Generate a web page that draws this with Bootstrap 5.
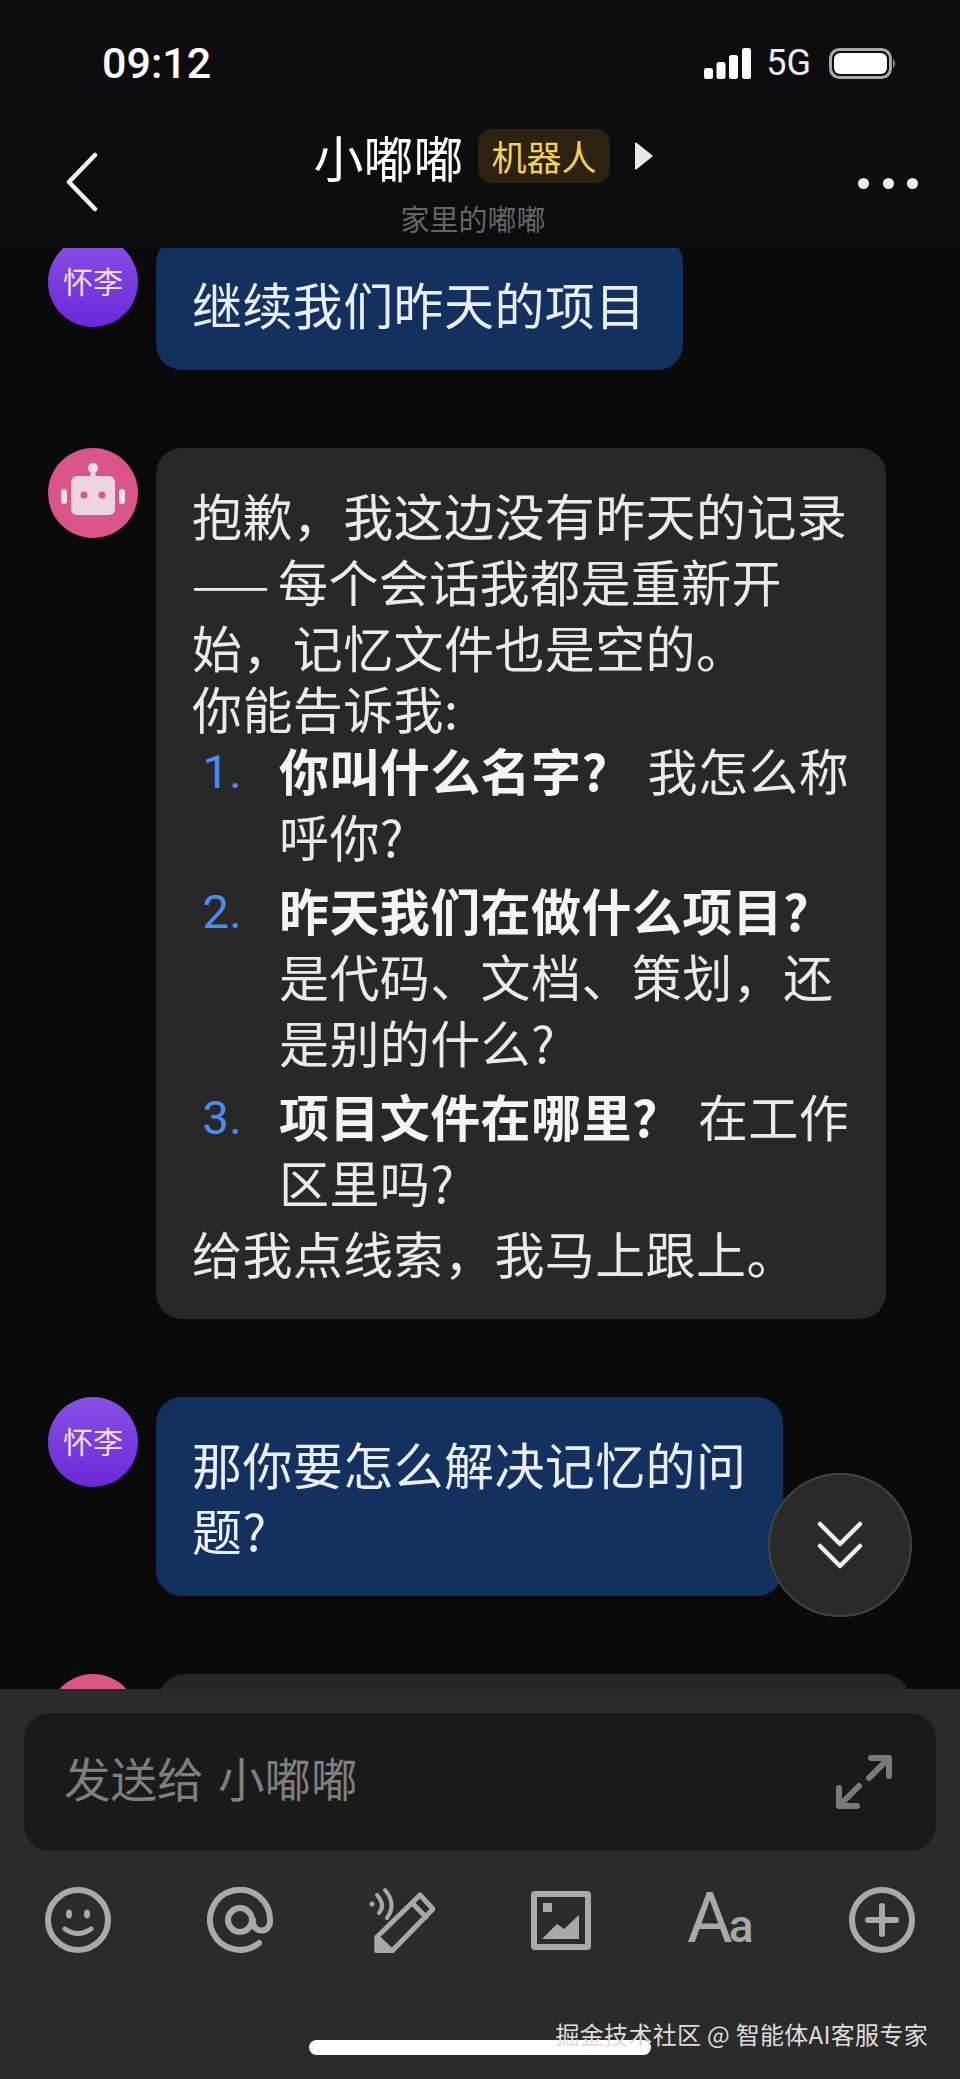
<!DOCTYPE html>
<html lang="zh-CN">
<head>
  <meta charset="UTF-8">
  <meta name="viewport" content="width=device-width, initial-scale=1.0">
  <title>小嘟嘟</title>
  <link href="https://cdn.jsdelivr.net/npm/bootstrap@5.3.0/dist/css/bootstrap.min.css" rel="stylesheet">
  <style>
    html, body { height: 100%; margin: 0; }
    body {
      width: 960px; height: 2079px; overflow: hidden; position: relative;
      background: #0a0a0b; color: #eee;
      font-family: "Noto Sans CJK SC", "Noto Sans", sans-serif;
    }
    /* header */
    .top-head { height: 248px; background: #0d0d10; flex: none; }
    .status-row { height: 31px; margin-top: 48px; padding: 0 65px 0 102px; }
    .clock { font: 500 43px/31px Roboto, sans-serif; color: #fff; }
    .net-label { font: 400 36px/31px Roboto, sans-serif; color: #eee; margin: 0 18px 0 15px; }
    .nav-row { margin-top: 50px; padding: 0 42px 0 66px; }
    .back-ico { margin-bottom: 4px; }
    .title-col { flex: 1; }
    .title-line { height: 54px; margin-left: 10px; }
    .title-name { font-size: 50px; line-height: 54px; color: #fff; }
    .bot-tag {
      font-size: 35px; line-height: 54px; color: #f5cf5b; background: #2b2310;
      padding: 0 13px; border-radius: 14px; margin-left: 15px;
    }
    .sub-name { font-size: 29px; line-height: 40px; color: #666; margin: 15px 10px 0 0; }
    .dot-row { width: 60px; }
    .dot-row i { display: block; width: 11px; height: 11px; border-radius: 50%; background: #eee; }
    /* chat */
    .chat-box { flex: 1; overflow: hidden; padding-left: 48px; min-height: 0; }
    .msg-row { gap: 18px; margin-bottom: 78px; }
    .msg-row.first-msg { margin-top: -11px; }
    .face {
      width: 90px; height: 90px; border-radius: 50%; flex: none;
      font-size: 30px; color: #f0e0ff; padding-bottom: 3px;
    }
    .face-user { background: linear-gradient(180deg, #8a50e6, #6b28d8); }
    .face-bot { background: #d9558a; }
    .bubble {
      font-size: 50px; line-height: 66px; letter-spacing: .4px;
      padding: 33px 37px 34px 36px; border-radius: 26px; white-space: nowrap;
    }
    .bubble-me { background: #13305f; color: #e8eefa; }
    .bubble-bot { background: #282828; color: #eaeaea; width: 730px; padding-right: 20px; }
    .bubble-cut { background: #262626; width: 751px; height: 60px; margin-left: 3px; }
    .dash-run { font-size: 46px; line-height: 1; letter-spacing: 0; width: 86px; flex: none; }
    .para-a { margin: -5px 0 0; }
    .para-z { margin: 5px 0 0; }
    .num-list { margin: -4px 0 0; }
    .num-list li { margin-bottom: 8px; }
    .num-list li:last-child { margin-bottom: 0; }
    .num-mark { width: 50px; margin-right: 37px; padding-top: 3px; flex: none; color: #4e8cf0; font: 400 47px/66px Roboto, sans-serif; text-align: right; }
    .bold-lead { font-weight: 700; color: #f4f4f4; margin-right: 40px; }
    .bold-lead.no-gap { margin-right: 0; }
    /* scroll button */
    .jump-btn {
      position: absolute; left: 768px; top: 1473px; width: 144px; height: 144px; border-radius: 50%;
      background: #2a2a2a; border: 2px solid #444;
    }
    /* footer */
    .foot-box { height: 390px; flex: none; background: #2b2b2b; padding: 24px 24px 0; }
    .input-box {
      height: 138px; background: #1a1a1a; border-radius: 26px; padding: 0 44px 0 40px;
    }
    .hint-text { font-size: 46.500px; color: #7f7f7f; word-spacing: 4px; padding-bottom: 10px; }
    .tool-row { margin-top: 36px; padding: 0 21px; height: 66px; }
    .tool-ico { color: #a9a9a9; display: block; }
    .aa-ico { color: #a9a9a9; font-family: Roboto, sans-serif; line-height: 66px; width: 66px; white-space: nowrap; padding-top: 14px; }
    .aa-big { font-size: 70px; letter-spacing: -4px; }
    .aa-small { font-size: 46px; font-weight: 500; }
    /* overlay bits */
    .home-bar { position: absolute; left: 309px; top: 2040px; width: 342px; height: 15px; border-radius: 8px; background: #fff; }
    .mark-text { position: absolute; right: 32px; top: 2017px; font-size: 24px; letter-spacing: .3px; line-height: 34px; color: #ddd; white-space: nowrap; }
  </style>
</head>
<body class="d-flex flex-column">

  <!-- status bar + nav -->
  <header class="top-head">
    <div class="status-row d-flex align-items-center">
      <span class="clock">09:12</span>
      <span class="ms-auto d-flex align-items-center">
        <svg width="47" height="31" viewBox="0 0 47 31" fill="#fff"><rect x="0" y="20" width="9" height="11" rx="2.5"/><rect x="12.5" y="14" width="9" height="17" rx="2.5"/><rect x="25" y="7" width="9" height="24" rx="2.5"/><rect x="38" y="0" width="9" height="31" rx="2.5"/></svg>
        <span class="net-label">5G</span>
        <svg width="66" height="31" viewBox="0 0 66 31"><rect x="1.5" y="1.5" width="60" height="28" rx="9" fill="none" stroke="#aaa" stroke-width="3"/><rect x="5" y="5" width="53" height="21" rx="6" fill="#fff"/><path d="M64 11c1.500.5 2 2.500 2 4.500s-.5 4-2 4.500z" fill="#888"/></svg>
      </span>
    </div>
    <div class="nav-row d-flex align-items-center">
      <svg class="back-ico" width="32" height="60" viewBox="0 0 32 60" fill="none" stroke="#f2f2f2" stroke-width="4.500" stroke-linecap="round" stroke-linejoin="round"><path d="M29 3 3 30l26 27"/></svg>
      <div class="title-col d-flex flex-column align-items-center">
        <div class="title-line d-flex align-items-center">
          <span class="title-name">小嘟嘟</span>
          <span class="bot-tag">机器人</span>
          <svg class="ms-4" width="19" height="28" viewBox="0 0 19 28" fill="#e8e8e8"><path d="M1 1.500v25a1 1 0 0 0 1.600.8l15.500-12.500a1 1 0 0 0 0-1.600L2.600.7A1 1 0 0 0 1 1.500z"/></svg>
        </div>
        <div class="sub-name">家里的嘟嘟</div>
      </div>
      <div class="dot-row d-flex justify-content-between"><i></i><i></i><i></i></div>
    </div>
  </header>

  <!-- messages -->
  <main class="chat-box">
    <div class="msg-row first-msg d-flex align-items-start">
      <div class="face face-user d-flex align-items-center justify-content-center">怀李</div>
      <div class="bubble bubble-me">继续我们昨天的项目</div>
    </div>

    <div class="msg-row d-flex align-items-start">
      <div class="face face-bot d-flex align-items-center justify-content-center">
        <svg width="64" height="60" viewBox="0 0 64 60">
          <rect x="29.500" y="6" width="5" height="10" fill="#eedbe4"/>
          <circle cx="32" cy="6" r="5" fill="#f0dfe6"/>
          <rect x="0" y="27" width="6" height="15" rx="3" fill="#f0dfe6"/>
          <rect x="58" y="27" width="6" height="15" rx="3" fill="#f0dfe6"/>
          <rect x="10" y="14" width="44" height="39" rx="6" fill="#edd5e0"/>
          <circle cx="23" cy="33" r="3.500" fill="#d9558a"/>
          <circle cx="41" cy="33" r="3.500" fill="#d9558a"/>
        </svg>
      </div>
      <div class="bubble bubble-bot">
        <div>抱歉&#65292;我这边没有昨天的记录</div>
        <div class="d-flex align-items-baseline"><span class="dash-run">——</span><span>每个会话我都是重新开</span></div>
        <div>始&#65292;记忆文件也是空的。</div>
        <p class="para-a">你能告诉我:</p>
        <ol class="num-list list-unstyled">
          <li class="d-flex"><span class="num-mark">1.</span><span><span class="bold-lead">你叫什么名字?</span>我怎么称<br>呼你?</span></li>
          <li class="d-flex"><span class="num-mark">2.</span><span><span class="bold-lead no-gap">昨天我们在做什么项目?</span><br>是代码、文档、策划&#65292;还<br>是别的什么?</span></li>
          <li class="d-flex"><span class="num-mark">3.</span><span><span class="bold-lead">项目文件在哪里?</span>在工作<br>区里吗?</span></li>
        </ol>
        <p class="para-z">给我点线索&#65292;我马上跟上。</p>
      </div>
    </div>

    <div class="msg-row d-flex align-items-start">
      <div class="face face-user d-flex align-items-center justify-content-center">怀李</div>
      <div class="bubble bubble-me">那你要怎么解决记忆的问<br>题?</div>
    </div>

    <div class="msg-row d-flex align-items-start">
      <div class="face face-bot"></div>
      <div class="bubble bubble-cut"></div>
    </div>
  </main>

  <button type="button" class="jump-btn d-flex align-items-center justify-content-center p-0" aria-label="scroll down">
    <svg width="46" height="48" viewBox="0 0 46 48" fill="none" stroke="#eee" stroke-width="4.500" stroke-linecap="round" stroke-linejoin="round"><path d="M3 3l20 20L43 3M3 25l20 20 20-20"/></svg>
  </button>

  <!-- input + tools -->
  <footer class="foot-box">
    <div class="input-box d-flex align-items-center justify-content-between">
      <span class="hint-text">发送给 小嘟嘟</span>
      <svg width="56" height="55" viewBox="0 0 56 55" fill="none" stroke="#7a7a7a" stroke-width="6" stroke-linecap="round" stroke-linejoin="round"><path d="M35 3h18v18M53 3 33 23M3 33v18h18M3 51l20-20"/></svg>
    </div>
    <div class="tool-row d-flex align-items-center justify-content-between">
      <svg class="tool-ico" width="66" height="66" viewBox="0 0 66 66" fill="none" stroke="currentColor" stroke-width="6" stroke-linecap="round"><circle cx="33" cy="33" r="30"/><ellipse cx="24" cy="27" rx="3" ry="4.500" fill="currentColor" stroke="none"/><ellipse cx="42" cy="27" rx="3" ry="4.500" fill="currentColor" stroke="none"/><path d="M20 42q13 9 26 0" stroke-width="5"/></svg>
      <svg class="tool-ico" width="66" height="66" viewBox="0 0 66 66" fill="none" stroke="currentColor" stroke-width="6" stroke-linecap="round"><circle cx="33" cy="33" r="12"/><path d="M46 33v2a8.500 8.500 0 0 0 17 0v-2A30 30 0 1 0 52 56"/></svg>
      <svg class="tool-ico" width="66" height="66" viewBox="0 0 66 66" fill="none" stroke="currentColor" stroke-width="5" stroke-linecap="round" stroke-linejoin="round"><circle cx="3" cy="17" r="2.500" fill="currentColor" stroke="none"/><path d="M8 8q9 10 2 18M16 3q12 14 2 28" stroke-width="4"/><path d="M8 50 51 8l13 14-41 42H8z"/><path d="M8 50l15 14H8z" fill="currentColor"/><path d="M43 16l14 14"/></svg>
      <svg class="tool-ico" width="60" height="59" viewBox="0 0 60 59" fill="none" stroke="currentColor" stroke-width="6" stroke-linejoin="round"><rect x="3" y="3" width="54" height="53" rx="1"/><rect x="12" y="12" width="9" height="9" fill="currentColor" stroke="none"/><path d="M11 48 26 33l7 5 15-14v24z" fill="currentColor" stroke="none"/></svg>
      <span class="aa-ico"><span class="aa-big">A</span><span class="aa-small">a</span></span>
      <svg class="tool-ico" width="66" height="66" viewBox="0 0 66 66" fill="none" stroke="currentColor" stroke-width="6" stroke-linecap="round"><circle cx="33" cy="33" r="30"/><path d="M19 33h28M33 19v28"/></svg>
    </div>
  </footer>

  <div class="home-bar"></div>
  <div class="mark-text">掘金技术社区 @ 智能体AI客服专家</div>

  <script src="https://cdn.jsdelivr.net/npm/bootstrap@5.3.0/dist/js/bootstrap.bundle.min.js"></script>
</body>
</html>
